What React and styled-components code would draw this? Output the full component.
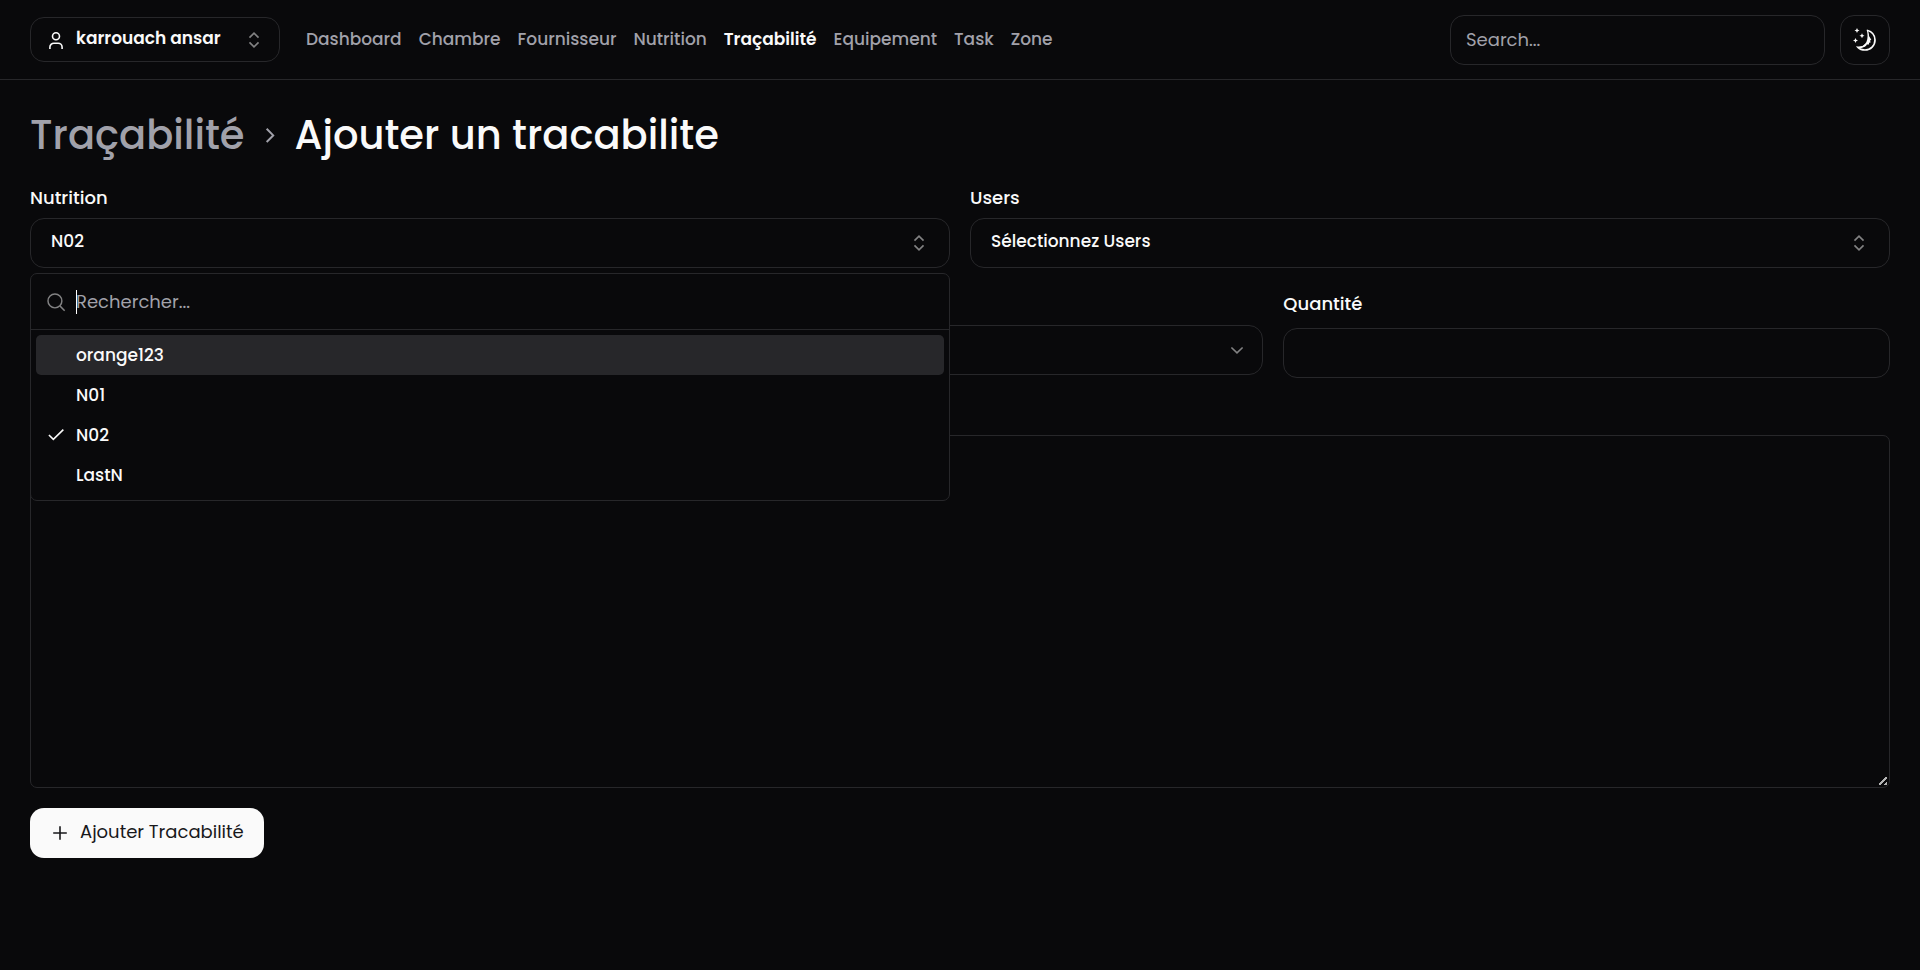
import React from "react";
import styled, { createGlobalStyle } from "styled-components";

const color = {
  bg: "#09090b",
  line: "#27272a",
  text: "#fafafa",
  muted: "#a1a1aa",
};

const GlobalStyle = createGlobalStyle`
  *, *::before, *::after { box-sizing: border-box; }
  html { color-scheme: dark; background: ${color.bg}; }
  body {
    margin: 0;
    background: ${color.bg};
    color: ${color.text};
    font-family: Poppins, Inter, sans-serif;
    font-size: 18px;
    line-height: 25px;
  }
  button, input, select, textarea { font: inherit; color: inherit; }
`;

const Header = styled.header`
  display: flex;
  align-items: center;
  height: 80px;
  padding: 0 30px;
  border-bottom: 1px solid ${color.line};
`;

const AccountButton = styled.button`
  display: flex;
  align-items: center;
  gap: 10px;
  width: 250px;
  height: 45px;
  padding: 0 15px;
  background: transparent;
  border: 1px solid ${color.line};
  border-radius: 14px;
  font-size: 17px;
  font-weight: 600;
  cursor: pointer;
`;

const Grow = styled.span`
  flex: 1;
  min-width: 0;
  padding-bottom: 3px;
  text-align: left;
  white-space: nowrap;
`;

const Nav = styled.nav`
  display: flex;
  gap: 17px;
  margin-left: 26px;
  font-weight: 500;
  font-size: 17px;
`;

const NavLink = styled.a`
  color: ${(p) => (p.$active ? color.text : color.muted)};
  font-weight: ${(p) => (p.$active ? 600 : 500)};
  text-decoration: none;
`;

const Tools = styled.div`
  display: flex;
  gap: 15px;
  margin-left: auto;
`;

const TextInput = styled.input`
  width: ${(p) => p.$width || "100%"};
  height: 50px;
  padding: 0 15px;
  background: transparent;
  border: 1px solid ${color.line};
  border-radius: 14px;
  outline: none;
  &::placeholder { color: ${color.muted}; opacity: 1; }
`;

const IconButton = styled.button`
  display: grid;
  place-items: center;
  width: 50px;
  height: 50px;
  padding: 0;
  background: transparent;
  border: 1px solid ${color.line};
  border-radius: 14px;
  cursor: pointer;
`;

const Main = styled.main`
  padding: 30px;
`;

const Breadcrumb = styled.h1`
  display: flex;
  align-items: center;
  gap: 15px;
  margin: 0 0 25px;
  font-size: 40px;
  line-height: 50px;
  font-weight: 500;
`;

const CrumbLink = styled.a`
  color: ${color.muted};
  text-decoration: none;
`;

const Form = styled.form`
  display: flex;
  flex-direction: column;
`;

const Row = styled.div`
  display: grid;
  grid-template-columns: repeat(${(p) => p.$columns}, 1fr);
  align-items: start;
  gap: 20px;
  margin-bottom: 20px;
`;

const Field = styled.div`
  position: relative;
  display: flex;
  flex-direction: column;
  gap: 8px;
  min-width: 0;
`;

const Label = styled.label`
  line-height: ${(p) => (p.$roomy ? "32px" : "25px")};
  font-weight: 500;
`;

const Trigger = styled.button`
  display: flex;
  align-items: center;
  width: 100%;
  height: 50px;
  padding: 0 20px;
  background: transparent;
  border: 1px solid ${color.line};
  border-radius: 14px;
  font-size: 17px;
  font-weight: 500;
  cursor: pointer;
`;

const SelectWrap = styled.div`
  display: grid;
  grid-column: span 2;
  align-items: center;
  padding-top: 37px;
  > * { grid-area: 1 / 1; }
  > svg { justify-self: end; margin-right: 16px; pointer-events: none; }
`;

const Select = styled.select`
  width: 100%;
  height: 50px;
  padding: 0 20px;
  appearance: none;
  background: transparent;
  border: 1px solid ${color.line};
  border-radius: 14px;
`;

const Popover = styled.div`
  position: absolute;
  top: calc(100% + 5px);
  left: 0;
  right: 0;
  z-index: 10;
  background: ${color.bg};
  border: 1px solid ${color.line};
  border-radius: 7px;
`;

const PopoverSearch = styled.label`
  display: flex;
  align-items: center;
  gap: 10px;
  height: 56px;
  padding: 0 15px;
  border-bottom: 1px solid ${color.line};
`;

const SearchBox = styled.span`
  flex: 1;
  display: flex;
  align-items: center;
`;

const Caret = styled.span`
  width: 1px;
  height: 24px;
  margin-right: -1px;
  background: #ffffff;
  z-index: 1;
`;

const BareInput = styled.input`
  flex: 1;
  min-width: 0;
  height: 54px;
  padding: 0;
  border: 0;
  outline: none;
  background: transparent;
  &::placeholder { color: ${color.muted}; opacity: 1; }
`;

const Options = styled.ul`
  margin: 0;
  padding: 5px;
  list-style: none;
`;

const Option = styled.li`
  display: flex;
  align-items: center;
  gap: 10px;
  height: 40px;
  padding: 0 10px;
  border-radius: 5px;
  font-size: 17px;
  font-weight: 500;
  background: ${(p) => (p.$highlighted ? color.line : "transparent")};
`;

const IconSlot = styled.span`
  display: flex;
  width: 20px;
  height: 20px;
`;

const TextArea = styled.textarea`
  display: block;
  width: 100%;
  height: 353px;
  margin: 37px 0 20px;
  padding: 10px 15px;
  background: transparent;
  border: 1px solid ${color.line};
  border-radius: 7px;
  outline: none;
  resize: vertical;
  &::-webkit-resizer {
    background: linear-gradient(
        135deg,
        transparent 42%,
        #b4b4b4 42% 58%,
        transparent 58% 78%,
        #b4b4b4 78%
      )
      5px 5px / 8px 8px no-repeat;
  }
`;

const SubmitButton = styled.button`
  display: flex;
  align-items: center;
  align-self: flex-start;
  gap: 10px;
  height: 50px;
  padding: 0 20px;
  background: ${color.text};
  color: #18181b;
  border: 0;
  border-radius: 14px;
  cursor: pointer;
`;

const Svg = ({ children, ...rest }) => (
  <svg width="20" height="20" viewBox="0 0 15 15" fill="none" stroke="currentColor" aria-hidden="true" {...rest}>
    {children}
  </svg>
);

const UserIcon = () => (
  <svg width="20" height="20" viewBox="0 0 20 20" fill="none" stroke="currentColor" strokeWidth="1.6" aria-hidden="true">
    <circle cx="10" cy="6.3" r="3.5" />
    <path d="M3.9 19V17.200a4 4 0 0 1 4-4h4.200a4 4 0 0 1 4 4V19" />
  </svg>
);

const SortIcon = () => (
  <Svg opacity="0.5">
    <path d="M4.1 5.700 7.500 2.300 10.900 5.700M4.100 9.300l3.400 3.400 3.400-3.400" strokeWidth="1.2" />
  </Svg>
);

const ChevronDown = () => (
  <Svg opacity="0.5">
    <path d="M3.300 5.600 7.500 9.600l4.200-4" strokeWidth="1.2" />
  </Svg>
);

const ChevronRight = () => (
  <Svg color={color.muted}>
    <path d="M5 2.800 9.900 7.800 5 12.800" strokeWidth="1.500" />
  </Svg>
);

const SearchIcon = () => (
  <Svg opacity="0.5">
    <circle cx="6.700" cy="6.700" r="5.200" strokeWidth="1.100" />
    <path d="m10.400 10.400 3.600 3.700" strokeWidth="1.100" />
  </Svg>
);

const CheckIcon = () => (
  <Svg>
    <path d="M2.200 7.500 5.500 10.800 13 3.500" strokeWidth="1.200" />
  </Svg>
);

const PlusIcon = () => (
  <Svg>
    <path d="M7.500 2.400v10.200M2.400 7.500h10.200" strokeWidth="1.200" />
  </Svg>
);

const MoonIcon = () => (
  <svg width="24" height="24" viewBox="0 0 24 24" fill="currentColor" aria-hidden="true">
    <path
      d="M14 2.2c5 1.4 8 5 8 9.8 0 5.600-4.400 10-10 10-3 0-5.400-1-7-2.700 3.500.2 6.300-.7 8-2.800"
      fill="none"
      stroke="currentColor"
      strokeWidth="1.700"
    />
    <path d="M13.600 1.500c1.900 2 2.500 4.200 2.400 6.400l2.300 3.800-1.200.9.500 1.800-1.500.3-.2 1.700-2 .1c-2.300 2.700-5.200 3.400-9.500 2.700 4.400-.4 7.400-2 9-5.200 1.600-3.400 1.500-8 .2-12.500Z" />
    <path d="m4 0 .8 1.700L6.500 2.500l-1.700.8L4 5l-.8-1.700L1.500 2.500l1.700-.8ZM9 5.200l.8 1.700 1.700.8-1.700.8L9 10.200l-.8-1.700-1.700-.8 1.700-.8ZM2.500 10l.8 1.700 1.700.8-1.700.8-.8 1.700-.8-1.700L0 12.500l1.700-.8Z" />
  </svg>
);

const links = ["Dashboard", "Chambre", "Fournisseur", "Nutrition", "Traçabilité", "Equipement", "Task", "Zone"];
const options = ["orange123", "N01", "N02", "LastN"];

export default function App() {
  return (
    <>
      <GlobalStyle />
      <Header>
        <AccountButton type="button">
          <UserIcon />
          <Grow>karrouach ansar</Grow>
          <SortIcon />
        </AccountButton>
        <Nav>
          {links.map((name) => (
            <NavLink key={name} href="#" $active={name === "Traçabilité"}>
              {name}
            </NavLink>
          ))}
        </Nav>
        <Tools>
          <TextInput $width="375px" type="search" aria-label="Search" placeholder="Search..." />
          <IconButton type="button" aria-label="Theme">
            <MoonIcon />
          </IconButton>
        </Tools>
      </Header>
      <Main>
        <Breadcrumb>
          <CrumbLink href="#">Traçabilité</CrumbLink>
          <ChevronRight />
          <span>Ajouter un tracabilite</span>
        </Breadcrumb>
        <Form>
          <Row $columns={2}>
            <Field>
              <Label htmlFor="nutrition">Nutrition</Label>
              <Trigger id="nutrition" type="button" aria-haspopup="listbox" aria-expanded="true">
                <Grow>N02</Grow>
                <SortIcon />
              </Trigger>
              <Popover>
                <PopoverSearch>
                  <SearchIcon />
                  <SearchBox>
                    <Caret />
                    <BareInput type="text" aria-label="Rechercher" placeholder="Rechercher..." />
                  </SearchBox>
                </PopoverSearch>
                <Options role="listbox">
                  {options.map((name, i) => (
                    <Option key={name} role="option" aria-selected={name === "N02"} $highlighted={i === 0}>
                      <IconSlot>{name === "N02" && <CheckIcon />}</IconSlot>
                      {name}
                    </Option>
                  ))}
                </Options>
              </Popover>
            </Field>
            <Field>
              <Label htmlFor="users">Users</Label>
              <Trigger id="users" type="button" aria-haspopup="listbox" aria-expanded="false">
                <Grow>Sélectionnez Users</Grow>
                <SortIcon />
              </Trigger>
            </Field>
          </Row>
          <Row $columns={3}>
            <SelectWrap>
              <Select aria-label="Type" defaultValue="">
                <option value="" />
              </Select>
              <ChevronDown />
            </SelectWrap>
            <Field>
              <Label $roomy htmlFor="quantity">Quantité</Label>
              <TextInput id="quantity" type="text" />
            </Field>
          </Row>
          <TextArea aria-label="Description" />
          <SubmitButton type="button">
            <PlusIcon />
            <Grow>Ajouter Tracabilité</Grow>
          </SubmitButton>
        </Form>
      </Main>
    </>
  );
}
